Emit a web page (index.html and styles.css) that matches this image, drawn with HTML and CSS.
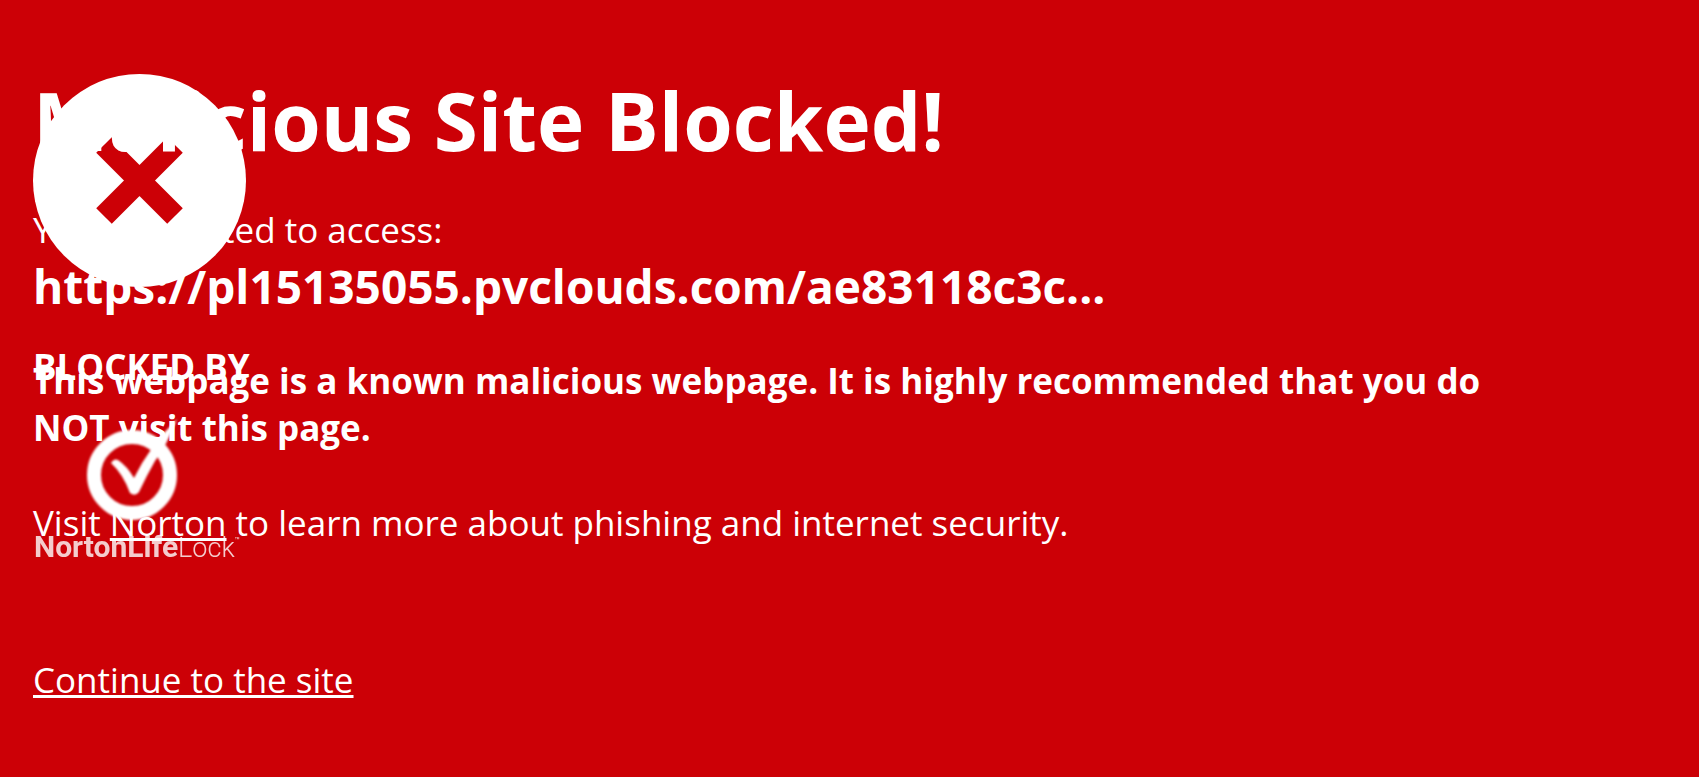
FILE: index.html
```html
<!DOCTYPE html>
<html lang="en">
<head>
<meta charset="utf-8">
<title>Malicious Site Blocked</title>
<link rel="stylesheet" href="styles.css">
</head>
<body>
<main class="page">
  <svg class="status-icon" viewBox="0 0 213 213" aria-hidden="true">
    <circle cx="106.5" cy="106.5" r="106.5" fill="#fff"/>
    <path d="M71 71L142 142M142 71L71 142" stroke="#cc0006" stroke-width="22"/>
  </svg>

  <h1 class="title">Malicious Site Blocked!</h1>
  <p class="text attempt">You attempted to access:</p>
  <p class="url">https://pl15135055.pvclouds.com/ae83118c3c...</p>
  <p class="text warning">This webpage is a known malicious webpage. It is highly recommended that you do NOT visit this page.</p>
  <p class="text learn">Visit <a class="link" href="#norton">Norton</a> to learn more about phishing and internet security.</p>
  <p class="text proceed"><a class="link" href="#continue">Continue to the site</a></p>

  <aside class="blocked-by">
    <p class="blocked-label">BLOCKED BY</p>
    <svg class="brand-mark" viewBox="0 0 100 120" aria-hidden="true">
      <circle cx="49" cy="70" r="38" fill="none" stroke="#fff" stroke-width="14"/>
      <path d="M28 58Q31 53 35 55Q44 61 51 73Q66 42 94 14Q83 42 72 56Q64 70 56 87Q52 92 47 88Q40 69 28 58Z" fill="#fff"/>
    </svg>
    <p class="brand-name"><b>NortonLife</b><span class="brand-light">Lock</span><span class="brand-tm">™</span></p>
  </aside>
</main>
</body>
</html>
```
FILE: styles.css
```css
* { box-sizing: border-box; }
body {
  margin: 0;
  min-height: 100vh;
  background: #cc0006;
  color: #fff;
  font-family: "Open Sans", "Noto Sans", sans-serif;
}
p, h1 { margin: 0; }
.page {
  position: relative;
  isolation: isolate;
  padding: 64px 10% 60px 33px;
}
.title {
  font-size: 80px;
  line-height: 112px;
  font-weight: 700;
}
.text {
  font-size: 35px;
  line-height: 47px;
}
.attempt { margin-top: 30px; }
.url {
  margin-top: 3px;
  font-size: 46px;
  line-height: 60px;
  font-weight: 700;
}
.warning {
  margin-top: 41px;
  font-weight: 700;
}
.learn { margin-top: 48px; }
.proceed { margin-top: 110px; }
.link {
  color: inherit;
  text-decoration-thickness: 3px;
  text-underline-offset: 2px;
  text-decoration-skip-ink: none;
}
/* Status badge sits behind the heading block */
.status-icon {
  position: absolute;
  z-index: -1;
  top: 74px;
  left: 33px;
  width: 213px;
}
/* Vendor credit lies over the warning text */
.blocked-by {
  position: absolute;
  top: 343px;
  left: 33px;
  width: 217px;
}
.blocked-label {
  font-size: 35px;
  line-height: 47px;
  font-weight: 700;
  white-space: nowrap;
}
.brand-mark {
  display: block;
  width: 100px;
  margin: 15px 0 0 50px;
  filter: blur(1px);
}
.brand-name {
  display: flex;
  align-items: baseline;
  padding-left: 1px;
  font-family: Roboto, sans-serif;
  font-size: 30px;
  line-height: 44px;
  opacity: 0.8;
}
.brand-light {
  font-size: 27px;
  font-weight: 300;
}
.brand-tm {
  align-self: flex-start;
  font-size: 8px;
  line-height: 32px;
}
```
